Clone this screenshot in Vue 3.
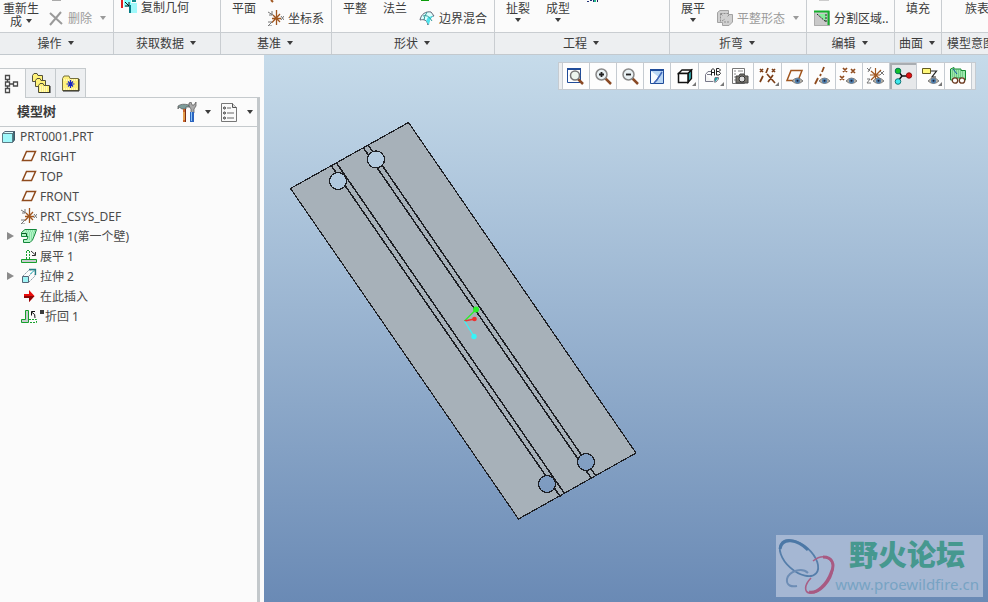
<template>
  <div class="app">
    <!-- Ribbon -->
    <header class="ribbon">
      <section v-for="g in groups" :key="g.label" class="group" :class="g.cls">
        <div class="group-body">
          <template v-for="(item, i) in g.items" :key="i">
            <button v-if="item.type === 'big'" class="big">
              <span v-for="line in item.lines" :key="line" class="big-line">
                {{ line }}<i v-if="item.inline && line === item.lines[1]" class="caret"></i>
              </span>
              <i v-if="item.menu" class="caret"></i>
            </button>
            <svg v-else-if="item.type === 'cut'" class="cut" viewBox="0 0 16 4" v-html="item.cut"></svg>
            <div v-else class="stack" :class="{ single: item.single }">
              <svg v-if="!item.single" class="cut" viewBox="0 0 16 4" v-html="item.cut"></svg>
              <button class="row-btn" :disabled="item.disabled">
                <svg class="icon" viewBox="0 0 16 16" v-html="icons[item.icon]"></svg>
                <span>{{ item.text }}</span>
                <i v-if="item.menu" class="caret far"></i>
              </button>
            </div>
          </template>
        </div>
        <button class="group-label">
          {{ g.label }}<i class="caret"></i>
        </button>
      </section>
    </header>

    <main class="workspace">
      <!-- Model tree -->
      <aside class="side">
        <div class="tabs">
          <button
            v-for="(t, i) in tabs"
            :key="t.icon"
            class="tab"
            :class="{ active: activeTab === i }"
            :aria-label="t.name"
            @click="activeTab = i"
          >
            <svg viewBox="0 0 20 20" v-html="icons[t.icon]"></svg>
          </button>
        </div>
        <div class="panel">
          <div class="panel-head">
            <h2>模型树</h2>
            <button class="tool" aria-label="设置">
              <svg viewBox="0 0 20 20" v-html="icons.tools"></svg>
              <i class="caret"></i>
            </button>
            <button class="tool" aria-label="显示">
              <svg viewBox="0 0 20 20" v-html="icons.list"></svg>
              <i class="caret"></i>
            </button>
          </div>
          <ul class="tree">
            <li v-for="n in nodes" :key="n.text" :class="{ root: n.root }">
              <button v-if="n.expand" class="expander" aria-label="展开"></button>
              <span v-else-if="!n.root" class="no-expander"></span>
              <svg class="icon" viewBox="0 0 16 16" v-html="icons[n.icon]"></svg>
              <i v-if="n.mark" class="mark"></i>
              <span>{{ n.text }}</span>
            </li>
          </ul>
        </div>
      </aside>

      <!-- Graphics area -->
      <section class="canvas">
        <svg class="model" viewBox="264 55 724 547" preserveAspectRatio="xMinYMin meet">
          <defs>
            <mask id="holes" maskUnits="userSpaceOnUse" x="264" y="55" width="724" height="547">
              <rect x="264" y="55" width="724" height="547" fill="#fff" />
              <circle v-for="h in holes" :key="h[0]" :cx="h[0]" :cy="h[1]" r="8.5" fill="#000" />
            </mask>
          </defs>
          <g mask="url(#holes)" shape-rendering="crispEdges">
            <path d="M408.5 122.5L290.5 188.5L518.5 519L636 453Z" fill="#a7b1b9" />
            <path
              d="M331.500 166L560.500 497M336.500 163L564.500 493.500M363.500 148L591.500 478.500M368.500 145.500L595.500 475.500"
              stroke="#1d1f24"
              stroke-width="1.500"
            />
          </g>
          <g fill="none" stroke="#1d1f24" stroke-width="1.200" shape-rendering="crispEdges">
            <path d="M408.5 122.5L290.5 188.5L518.5 519L636 453Z" />
            <circle v-for="h in holes" :key="h[0]" :cx="h[0]" :cy="h[1]" r="8.5" />
          </g>
          <g stroke-width="1.300">
            <path d="M464.500 321L476 309.500" stroke="#2bf02b" />
            <circle cx="476" cy="309.500" r="3" fill="#2bf02b" />
            <path d="M464.500 321L474.500 319" stroke="#f03030" />
            <circle cx="474.500" cy="319" r="2.300" fill="#f03030" />
            <path d="M464.500 321L474 336.500" stroke="#37f4f8" />
            <circle cx="474" cy="336.500" r="2.700" fill="#37f4f8" />
          </g>
        </svg>

        <div class="view-bar">
          <i class="grip"></i>
          <button
            v-for="b in viewButtons"
            :key="b.icon"
            :class="{ fly: b.fly, on: b.on }"
            :aria-label="b.name"
          >
            <svg viewBox="0 0 20 20" v-html="icons[b.icon]"></svg>
          </button>
          <i class="grip"></i>
        </div>

        <div class="logo">
          <svg viewBox="0 0 58 58" fill="none">
            <ellipse cx="22" cy="21" rx="13" ry="23" transform="rotate(-48 22 21)" stroke="#557eaa" stroke-width="1.800" />
            <path d="M3 12C5 0 20 2 31 13" stroke="#4c78a6" stroke-width="3" />
            <path d="M36 24C46 16 56 20 56 31C55 45 42 57 33 56C27 56 27 48 34 41" stroke="#a85f86" stroke-width="1.600" />
            <path d="M46 20C56 20 58 28 54 36C50 47 40 57 32 55" stroke="#a85a82" stroke-width="3" />
            <path d="M31 36C25 30 12 34 10 42C9 49 15 50 20 49" stroke="#6d8db5" stroke-width="2" />
          </svg>
          <div class="logo-text">
            <strong>野火论坛</strong>
            <a href="#">www.proewildfire.cn</a>
          </div>
        </div>
      </section>
    </main>
  </div>
</template>

<script setup>
import { ref } from 'vue'

const activeTab = ref(0)

// Shared icon parts
const eye = '<path d="M7 15Q12.500 9 18 15Q12.500 20 7 15Z" fill="#b9b4aa" stroke="#666" stroke-width=".8"/><circle cx="12.500" cy="14.800" r="2.600" fill="#4f7fae"/><circle cx="12.500" cy="14.800" r="1" fill="#223"/>'
const lens = '<path d="M12.500 12.500L18 18" stroke="#8a4a25" stroke-width="2.500"/><circle cx="8.500" cy="8.500" r="5.500" fill="#e9f1f4" stroke="#888" stroke-width="1.500"/>'

const icons = {
  del: '<path d="M2 3L14 14M13 2L2 15" stroke="#9a9a9a" stroke-width="2"/>',
  copyGeom: '<path d="M1 0V9" stroke="#d22" stroke-width="2"/><path d="M3 0H10V8H3Z" fill="#8ff"/><path d="M4 3L8 7M8 3V7H4" stroke="#111" fill="none"/><path d="M11 0H15V3H11Z" fill="#128a8a"/><path d="M9 6V14" stroke="#067c86" stroke-width="2"/><path d="M10 4H16V14H10Z" fill="#9ff8fa"/>',
  csys: '<path d="M8.500 0V15M4 8.500H13M5 5L12 12M12 4L4 12.500" stroke="#a0561f" stroke-width="1.300"/><path d="M0 2L5 5M4 1V5H1M13 6L16 10M16 6L13 10M0 12H4L0 16H4" fill="none" stroke="#777"/>',
  blend: '<path d="M1 10C2 4 7 1 12 2L15 6C12 6 10 9 9 15C8 10 5 9 1 10Z" fill="#dff" stroke="#667" /><path d="M9 7L15 6C12 7 11 10 10 15L7 11Z" fill="#4fe5ee"/><path d="M4 6Q9 4 13 11M8 2Q5 7 5 10" fill="none" stroke="#399"/>',
  flatForm: '<path d="M.5 2.500L3 .5H11.500V4.500H15.500V12L12 15.500H5.500V12.500H.5Z" fill="#d0d0d0" stroke="#a2a2a2"/><path d="M3.500 3.500H11.500M3.500 3.500V12M12 12H6M4 4L6 6M12 5L10 7M5 11L8 9" fill="none" stroke="#8f8f8f" stroke-dasharray="2 1"/>',
  split: '<path d="M.5 1.500H15.500V15.500H.5Z" fill="#c9c9c9" stroke="#777" stroke-dasharray="1 1"/><path d="M0 1.500H14.500V15" fill="none" stroke="#14b02c" stroke-width="2"/><path d="M4 4H12V12Z" fill="#86ef9c"/><path d="M3 4L12 12V4" fill="none" stroke="#222" stroke-dasharray="2 1"/>',
  tree: '<g transform="translate(-1 0)" fill="#fff" stroke="#4a4a4a" stroke-width="1.300"><path d="M5.500 5V15M6 10H12"/><path d="M3.500 1.500H7.500V5.500H3.500ZM3.500 8H7.500V12H3.500ZM3.500 14.500H7.500V18.500H3.500ZM11.500 8H15.500V12H11.500Z"/></g>',
  folders: '<g fill="#fff27a" stroke="#55523a"><path d="M1.500 2.500L3 .5H6L7 2.500H11.500V8.500H1.500Z"/><path d="M4.500 7.500L6 5.500H9L10 7.500H14.500V13.500H4.500Z"/><path d="M7.500 12.500L9 10.500H12L13 12.500H18.500V19.500H7.500Z"/></g><path d="M9 14H17M9 16H17M9 18H17" stroke="#fff" stroke-dasharray="1 1"/><path d="M19 13V20H8" fill="none" stroke="#222"/>',
  favorite: '<path d="M1.500 5.500L3 3H8L9 5.500H17.500V17.500H1.500Z" fill="#fff17c" stroke="#77713e"/><path d="M18 6V18H2" fill="none" stroke="#222"/><path d="M3 7H17M3 16H17" stroke="#fff" stroke-dasharray="1 1"/><path d="M9.500 7V15M5.500 11H13.500M7 8.500L12 13.500M12 8.500L7 13.500" stroke="#1523c4" stroke-width="1.200"/>',
  tools: '<path d="M1 7V4Q5 1 12 3L13 5H9V7H5L2 5Z" fill="#7d9c9a" stroke="#555" stroke-width=".7"/><path d="M6 7H9V20H6Z" fill="#c9652a"/><path d="M8.500 7V20" stroke="#7b2d12"/><path d="M7 10V18" stroke="#ffd76a"/><path d="M12 1V4L14 7V11H17V7L19 4V0L17 3H15L14 0Z" fill="#aaa" stroke="#555" stroke-width=".7"/><path d="M13 10H17V20H13Z" fill="#2b64c0"/><path d="M14.500 10V19" stroke="#8cc5f4"/>',
  list: '<path d="M2.500 1.500H13.500L17.500 5.500V19.500H2.500Z" fill="#fafafa" stroke="#777"/><path d="M13.500 1.500V5.500H17.500" fill="#ddd" stroke="#555"/><path d="M8 6H12M8 11H15M8 16H15" stroke="#666"/><g fill="#eee" stroke="#333"><circle cx="5.500" cy="6" r="1"/><circle cx="5.500" cy="11" r="1"/><circle cx="5.500" cy="16" r="1"/></g>',
  part: '<path d="M.5 5.500L3 3.500H12.500L10.500 5.500Z" fill="#dff" stroke="#567"/><path d="M10.500 5.500L12.500 3.500V12L10.500 14.500Z" fill="#37757b" stroke="#456"/><path d="M.5 5.500H10.500V14.500H.5Z" fill="#9ff8fa" stroke="#5d7b85"/>',
  plane: '<path d="M5.500 3.500H14.500L10.500 12.500H1.500Z" fill="none" stroke="#8f4a1c" stroke-width="1.500"/>',
  wall: '<path d="M.5 4.500L4 1.500H15.500L14 6L11.500 12L9 14.500H2.500V11.500H6L7 8.500H.5Z" fill="#b4f5c8" stroke="#13863a"/><path d="M5 3H14M4 5H14M6 7H13M8 9H12M8 11H11" stroke="#5fcf86" stroke-dasharray="1 1"/><path d="M1 5.500H5.500V8" fill="none" stroke="#0a5a24"/>',
  unbend: '<path d="M.5 11.500H15.500V14.500H.5Z" fill="#c9ccd0" stroke="#17a02d"/><path d="M5.500 11V2.500H8.500V11" fill="#fbfbfb" stroke="#17a02d" stroke-dasharray="2 1"/><path d="M10 3L14.500 7M14.500 4V7.500H11" fill="none" stroke="#333"/>',
  extrude: '<path d="M2 8L8 2H14V8L8 14M8 8L14 2" fill="none" stroke="#8796a3" stroke-dasharray="2 1"/><path d="M1.500 8.500H7.500V14.500H1.500Z" fill="#9ff4f6" stroke="#567"/><path d="M8 1.500H14.500V7" fill="none" stroke="#257f85" stroke-width="1.300"/><path d="M9 6L13 2.500" stroke="#4fd0d6"/>',
  insert: '<path d="M3 6H8V2L13.500 8L8 14V10H3Z" fill="#e80d0d"/><path d="M3 8H13.500L8 14V10H3Z" fill="#8d0505"/>',
  bendBack: '<path d="M.5 11.500H4.500V2.500H7.500V14.500H.5Z" fill="#c9ccd0" stroke="#17a02d"/><path d="M8 11.500H15.500V14.500H8" fill="none" stroke="#17a02d" stroke-dasharray="2 1"/><path d="M14 10Q15 6 10.500 4M10.500 7.500V3.500H14" fill="none" stroke="#111"/>',
  refit: '<path d="M1.500 2.500H14.500V16.500H1.500Z" fill="#fff" stroke="#204c99"/><path d="M1 3H15" stroke="#204c99" stroke-width="2"/><path d="M12 13L17 18" stroke="#8a4a25" stroke-width="2.500"/><circle cx="9" cy="9.500" r="4.500" fill="#edf6ef" stroke="#777" stroke-width="1.500"/>',
  zoomIn: lens + '<path d="M6 8.500H11M8.500 6V11" stroke="#222" stroke-width="1.800"/>',
  zoomOut: lens + '<path d="M6 8.500H11" stroke="#222" stroke-width="1.800"/>',
  repaint: '<path d="M3.500 3.500H16.500V17.500H3.500Z" fill="#b9d6f4" stroke="#204c99"/><path d="M3 4H17" stroke="#204c99" stroke-width="2"/><path d="M4 5L13 12L8 17H4Z" fill="#f8fbff"/><path d="M15 6L10 14L7 17" stroke="#4068bb" stroke-width="1.600"/>',
  shaded: '<path d="M3.500 7.500L7 4H16.500L13 7.500Z" fill="#fff" stroke="#111" stroke-width="1.300"/><path d="M13 7.500L16.500 4V12.500L13 16.500Z" fill="#2ea7ad" stroke="#111" stroke-width="1.300"/><path d="M3.500 7.500H13V16.500H3.500Z" fill="#fff" stroke="#111" stroke-width="1.500"/>',
  views: '<path d="M2.500 8.500L5 5.500H8M2.500 8.500V15.500H10M4 8.500H8M12 11.500H15.500V13L13 16H11Z" fill="#f4f4f4" stroke="#778"/><path d="M12 12H15L12 16Z" fill="#1aa6a6"/><path d="M8.500 9.500V4L10 2.500L11.500 4V9.500M8.500 6.500H11.500M13.500 9V2.500H16L17.500 4L16 5.500L17.500 7.500L16 9H13.500M13.500 5.500H16" fill="none" stroke="#222"/>',
  camera: '<path d="M2.500 2.500H14.500V17.500H2.500Z" fill="#fff" stroke="#777"/><path d="M4 5H6M8 5H13M4 8H6M4 11H6M4 14H6" stroke="#888"/><path d="M6 10H9L10 8H14L15 10H18V17H6Z" fill="#77746d" stroke="#444"/><circle cx="12" cy="13" r="3" fill="#ddd" stroke="#333"/>',
  datum: '<path d="M2 3L5 6M5 3L2 6M10 2L8 7M5 10L2 16M9 8L17 17M15 9L10 16M14 3L17 6M17 3L14 6" stroke="#7c3f18" stroke-width="1.700"/>',
  planeEye: '<path d="M6 4.500H17L13 14.500H2Z" fill="none" stroke="#a0561f" stroke-width="1.500"/>' + eye,
  axisEye: '<path d="M12 1L10 6M9 8L8 10M6 12L3 18" stroke="#8f4a1c" stroke-width="1.800"/>' + eye,
  pointEye: '<path d="M4 2L8 6M8 2L4 6M12 3L16 7M16 3L12 7M1 10L5 14M5 10L1 14" stroke="#8f4a1c" stroke-width="1.700"/>' + eye,
  csysEye: '<path d="M9.500 2V16M4 9H14M5 5L14 13M15 4L5 14" stroke="#a0561f" stroke-width="1.200"/><path d="M1 2L4 5M5 1L2 6M14 5L18 9M18 5L14 9M1 13H4L1 17H5" fill="none" stroke="#777"/>' + eye,
  spin: '<path d="M5 5L9 10L5 15M9 10H15" fill="none" stroke="#111" stroke-width="1.500"/><circle cx="5" cy="5" r="2.800" fill="#11c02b" stroke="#075"/><circle cx="5" cy="15.500" r="2.800" fill="#3ce8ee" stroke="#177"/><circle cx="16" cy="9.500" r="2.700" fill="#e01010" stroke="#811"/>',
  noteEye: '<path d="M1.500 2.500H9.500V7.500H1.500Z" fill="#fff87a" stroke="#665c20"/><path d="M10 5H15.500L11 11H15" fill="none" stroke="#222" stroke-width="1.200"/>' + eye,
  glasses: '<path d="M2.500 3L6 1.500V3H13V4.500H17.500V14H14V12H6V14H2.500Z" fill="#9beaac" stroke="#168a33"/><path d="M4 4H14M4 6H15M4 8H15M4 10H15" stroke="#55ab69" stroke-dasharray="1 1"/><path d="M5 3L9 8" stroke="#15a"/><g fill="#fff" stroke="#6d3c22" stroke-width="1.300"><circle cx="7" cy="14.500" r="2.700"/><circle cx="14" cy="14.500" r="2.700"/></g>'
}

const groups = [
  {
    label: '操作',
    cls: 'g-edit',
    items: [
      { type: 'big', lines: ['重新生', '成'], inline: true },
      { icon: 'del', text: '删除', disabled: true, menu: true, cut: '<path d="M4 0H13" stroke="#aaa" stroke-width="2"/>' }
    ]
  },
  { label: '获取数据', cls: 'g-data', items: [{ icon: 'copyGeom', text: '复制几何', single: true }] },
  {
    label: '基准',
    cls: 'g-datum',
    items: [
      { type: 'big', lines: ['平面'] },
      { icon: 'csys', text: '坐标系', cut: '<path d="M3 0L5 2" stroke="#a0561f" stroke-width="2"/>' }
    ]
  },
  {
    label: '形状',
    cls: 'g-shape',
    items: [
      { type: 'big', lines: ['平整'] },
      { type: 'big', lines: ['法兰'] },
      { icon: 'blend', text: '边界混合', cut: '<path d="M2 0H10" stroke="#0b9c0b" stroke-width="2"/>' }
    ]
  },
  {
    label: '工程',
    cls: 'g-eng',
    items: [
      { type: 'big', lines: ['扯裂'], menu: true },
      { type: 'big', lines: ['成型'], menu: true },
      { type: 'cut', cut: '<path d="M1 1.500H3M4 .5H6M7.500 0V2" stroke="#237"/><path d="M9 0V2" stroke="#2b8" stroke-width="2"/><path d="M11.500 0V2" stroke="#225"/>' }
    ]
  },
  {
    label: '折弯',
    cls: 'g-bend',
    items: [
      { type: 'big', lines: ['展平'], menu: true },
      { icon: 'flatForm', text: '平整形态', disabled: true, menu: true, cut: '' }
    ]
  },
  { label: '编辑', cls: 'g-modify', items: [{ icon: 'split', text: '分割区域..', cut: '<path d="M5 0H15" stroke="#ccc" stroke-width="2"/>' }] },
  { label: '曲面', cls: 'g-surf', items: [{ type: 'big', lines: ['填充'] }] },
  { label: '模型意图', cls: 'g-intent', items: [{ type: 'big', lines: ['族表'] }] }
]

const tabs = [
  { icon: 'tree', name: '模型树' },
  { icon: 'folders', name: '文件夹浏览器' },
  { icon: 'favorite', name: '收藏夹' }
]

const nodes = [
  { icon: 'part', text: 'PRT0001.PRT', root: true },
  { icon: 'plane', text: 'RIGHT' },
  { icon: 'plane', text: 'TOP' },
  { icon: 'plane', text: 'FRONT' },
  { icon: 'csys', text: 'PRT_CSYS_DEF' },
  { icon: 'wall', text: '拉伸 1(第一个壁)', expand: true },
  { icon: 'unbend', text: '展平 1' },
  { icon: 'extrude', text: '拉伸 2', expand: true },
  { icon: 'insert', text: '在此插入' },
  { icon: 'bendBack', text: '折回 1', mark: true }
]

const holes = [
  [338, 181],
  [376, 159.5],
  [586, 462],
  [547, 484]
]

const viewButtons = [
  { icon: 'refit', name: '重新调整' },
  { icon: 'zoomIn', name: '放大' },
  { icon: 'zoomOut', name: '缩小' },
  { icon: 'repaint', name: '重画' },
  { icon: 'shaded', name: '显示样式', fly: true },
  { icon: 'views', name: '已命名视图', fly: true },
  { icon: 'camera', name: '视图管理器' },
  { icon: 'datum', name: '基准显示', fly: true },
  { icon: 'planeEye', name: '平面显示' },
  { icon: 'axisEye', name: '轴显示' },
  { icon: 'pointEye', name: '点显示' },
  { icon: 'csysEye', name: '坐标系显示' },
  { icon: 'spin', name: '旋转中心', on: true },
  { icon: 'noteEye', name: '注释显示', fly: true },
  { icon: 'glasses', name: '钣金显示' }
]
</script>

<style>
body {
  margin: 0;
}
</style>

<style scoped>
.app {
  display: flex;
  flex-direction: column;
  min-height: 100vh;
  overflow: hidden;
  background: #fbfbfb;
  color: #3c3c3c;
  font-family: "Noto Sans", "Noto Sans CJK SC", sans-serif;
  font-size: 12px;
}

button {
  margin: 0;
  padding: 0;
  border: none;
  background: none;
  color: inherit;
  font: inherit;
  white-space: nowrap;
  cursor: pointer;
}

svg {
  display: block;
  flex: none;
}

.caret {
  display: inline-block;
  flex: none;
  border: 3px solid transparent;
  border-top: 4px solid currentColor;
  border-bottom: none;
}

/* Ribbon */
.ribbon {
  display: flex;
  border-bottom: 1px solid #c3c9ce;
  font-family: "Noto Sans CJK SC", sans-serif;
}

.group {
  display: flex;
  flex-direction: column;
  flex: none;
  box-sizing: border-box;
  border-right: 1px solid #c9cdd1;
}

.group-body {
  display: flex;
  align-items: flex-start;
  height: 32px;
  overflow: hidden;
}

.group-label {
  display: flex;
  align-items: center;
  justify-content: center;
  gap: 6px;
  height: 22px;
  padding: 0 2px 2px 0;
  border-top: 1px solid #c9cdd1;
  background: #edeff1;
}

.g-edit { width: 114px; }
.g-data { width: 107px; }
.g-datum { width: 111px; }
.g-shape { width: 163px; }
.g-eng { width: 175px; }
.g-bend { width: 137px; }
.g-modify { width: 88px; }
.g-surf { width: 47px; }

.g-intent {
  flex: 1 0 0;
  min-width: 0;
  border-right: none;
  overflow: hidden;
}

.g-intent .group-label {
  justify-content: flex-start;
  padding-left: 5px;
}

.g-edit .group-body { padding-left: 3px; gap: 9px; }
.g-data .group-body { padding-left: 7px; }
.g-datum .group-body,
.g-eng .group-body,
.g-bend .group-body,
.g-surf .group-body { padding-left: 11px; }
.g-datum .group-body { gap: 12px; }
.g-shape .group-body { padding-left: 11px; gap: 16px; }
.g-shape .stack { margin-left: -4px; }
.g-eng .group-body { gap: 16px; }
.g-bend .group-body { gap: 12px; }
.g-modify .group-body { padding-left: 7px; }
.g-intent .group-body { padding-left: 23px; }

.big {
  display: flex;
  flex-direction: column;
  align-items: center;
  padding-top: 1px;
}

.big-line {
  display: flex;
  align-items: center;
  gap: 4px;
  line-height: 13px;
}

.big > .caret {
  margin-top: 4px;
}

.stack {
  display: flex;
  flex-direction: column;
  gap: 6px;
}

.cut {
  width: 16px;
  height: 4px;
}

.row-btn {
  display: flex;
  align-items: center;
  gap: 4px;
  height: 16px;
  line-height: 16px;
}

.row-btn:disabled {
  color: #9a9a9a;
}

.single .row-btn {
  height: 14px;
}

.far {
  margin-left: 4px;
}

.icon {
  width: 16px;
  height: 16px;
}

/* Workspace */
.workspace {
  display: flex;
  flex: 1;
}

.side {
  display: flex;
  flex-direction: column;
  flex: none;
  width: 264px;
}

.tabs {
  display: flex;
  margin-top: 13px;
}

.tab {
  display: flex;
  align-items: center;
  justify-content: center;
  box-sizing: border-box;
  width: 30px;
  height: 29px;
  border-top: 1px solid #c5cacd;
  border-right: 1px solid #c5cacd;
  background: #edeff1;
}

.tab:first-child {
  width: 26px;
}

.tab.active {
  position: relative;
  background: #fbfbfb;
  height: 30px;
  margin-bottom: -1px;
}

.tab svg {
  width: 20px;
  height: 20px;
}

.panel {
  flex: 1;
  margin-right: 4px;
  border-top: 1px solid #c5cacd;
  border-right: 3px solid #c3c8cb;
}

.panel-head {
  display: flex;
  align-items: center;
  gap: 8px;
  height: 28px;
  padding: 0 4px 0 17px;
  border-bottom: 1px solid #c5cacd;
}

.panel-head h2 {
  flex: 1;
  margin: 0;
  font-family: "Noto Sans CJK SC", sans-serif;
  font-size: 13px;
  font-weight: 700;
  line-height: 20px;
  padding-bottom: 2px;
}

.tool {
  display: flex;
  align-items: center;
  gap: 8px;
}

.tool svg {
  width: 20px;
  height: 20px;
}

.tree {
  margin: 0;
  padding: 0;
  list-style: none;
  color: #4a4a4a;
}

.tree li {
  display: flex;
  align-items: center;
  box-sizing: border-box;
  height: 20px;
  padding: 0 0 2px 7px;
  gap: 3px;
  white-space: nowrap;
}

.tree .root {
  padding-left: 2px;
  gap: 2px;
}

.expander,
.no-expander {
  width: 11px;
}

.expander {
  display: flex;
}

.expander::before {
  content: "";
  border: 4px solid transparent;
  border-left: 7px solid #8b8b8b;
  border-right: none;
}

.mark {
  align-self: flex-start;
  width: 4px;
  height: 4px;
  margin: 3px -2px 0 0;
  background: #3c3c3c;
}

/* Graphics area */
.canvas {
  position: relative;
  flex: 1;
  background: linear-gradient(#c6dbea, #6a8ab5);
}

.model {
  position: absolute;
  inset: 0;
  width: 100%;
  height: 100%;
}

.view-bar {
  position: absolute;
  top: 7px;
  right: 12px;
  display: flex;
  border: 1px solid #c5cbd1;
  background: #fdfdfd;
}

.view-bar button {
  position: relative;
  display: flex;
  align-items: center;
  justify-content: center;
  box-sizing: border-box;
  width: 27px;
  height: 26px;
  border-left: 1px solid #c5cbd1;
}

.view-bar button svg {
  width: 20px;
  height: 20px;
}

.view-bar .fly {
  width: 28px;
}

.view-bar .fly::after {
  content: "";
  position: absolute;
  right: 2px;
  bottom: 3px;
  border-left: 4px solid transparent;
  border-bottom: 4px solid #777;
}

.view-bar .on {
  background: #e6e8ea;
  box-shadow: inset 1px 1px 0 1px #a9adb1;
}

.grip {
  width: 3px;
  background: #eceef0;
}

.grip:last-child {
  border-left: 1px solid #c5cbd1;
}

.logo {
  position: absolute;
  right: 5px;
  bottom: 5px;
  display: flex;
  align-items: center;
  box-sizing: border-box;
  height: 62px;
  padding: 0 4px 0 1px;
  background: #a5b7d3;
}

.logo svg {
  width: 58px;
  height: 58px;
}

.logo-text {
  display: flex;
  flex-direction: column;
  align-items: center;
  gap: 6px;
}

.logo strong {
  color: #46988f;
  font-family: "Noto Sans CJK SC", sans-serif;
  font-size: 29px;
  font-weight: 900;
  line-height: 30px;
}

.logo a {
  color: #77a3c3;
  font-size: 15px;
  line-height: 20px;
  text-decoration: none;
}
</style>
